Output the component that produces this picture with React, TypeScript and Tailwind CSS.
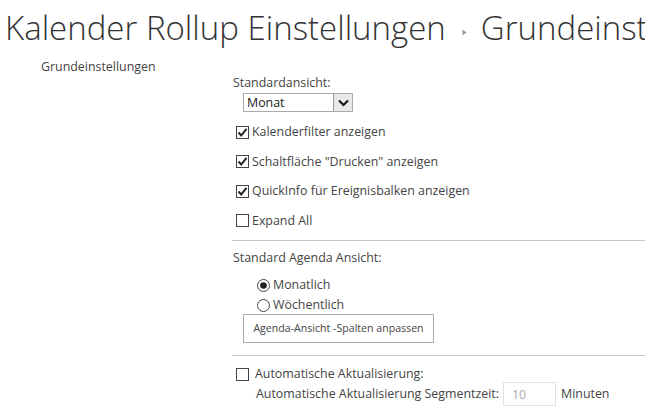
import React from "react";

const font = { fontFamily: '"Open Sans", "Noto Sans", sans-serif' };

function Check({ checked }: { checked: boolean }) {
  return (
    <svg width="13" height="13" viewBox="0 0 13 13" className="shrink-0">
      <rect x="0.5" y="0.5" width="12" height="12" fill="#fff" stroke="#444" />
      {checked && <path d="M2.5 6.5 L5.2 9.5 L10.5 2.8" fill="none" stroke="#222" strokeWidth="2" />}
    </svg>
  );
}

function Radio({ checked }: { checked: boolean }) {
  return (
    <svg width="13" height="13" viewBox="0 0 13 13" className="shrink-0">
      <circle cx="6.5" cy="6.5" r="6" fill="#fff" stroke="#444" />
      {checked && <circle cx="6.5" cy="6.5" r="3.3" fill="#222" />}
    </svg>
  );
}

export default function App() {
  return (
    <div className="w-[645px] h-[412px] overflow-hidden bg-white text-[#444] text-[12.4px]" style={font}>
      <div className="pl-[5px] pt-[1px] h-[55px] whitespace-nowrap text-[33px] font-light text-[#333] leading-[48px] flex items-center">
        <span>Kalender Rollup Einstellungen</span>
        <svg width="5" height="7" viewBox="0 0 5 7" className="ml-[16px] mr-[14px] mt-[8px] shrink-0">
          <path d="M0.5 0.5 L4.5 3.5 L0.5 6.5 Z" fill="#999" />
        </svg>
        <span>Grundeinstellungen</span>
      </div>
      <div className="flex">
        <div className="w-[232px] pl-[41px] pt-[3px] text-[#444]">Grundeinstellungen</div>
        <div className="flex-1 pt-[19px]">
          <div className="pl-[1px] leading-[18px]">Standardansicht:</div>
          <div className="pl-[11px] mt-[1px]">
            <div className="w-[110px] h-[19px] border border-[#aaa] flex items-center justify-between">
              <span className="pl-[3px] text-[#222] leading-[17px]">Monat</span>
              <div className="w-[19px] h-[17px] border-l border-[#999] bg-[#e8e8e8] flex items-center justify-center">
                <svg width="11" height="8" viewBox="0 0 11 8">
                  <path d="M1 1.5 L5.5 6 L10 1.5" fill="none" stroke="#111" strokeWidth="2" />
                </svg>
              </div>
            </div>
          </div>
          <div className="pl-[4px] mt-[11px] flex flex-col gap-[11.5px]">
            {[
              ["Kalenderfilter anzeigen", true],
              ['Schaltfläche "Drucken" anzeigen', true],
              ["QuickInfo für Ereignisbalken anzeigen", true],
              ["Expand All", false],
            ].map(([t, c]) => (
              <div key={t as string} className="flex items-center gap-[3px] h-[18px] leading-[18px]">
                <Check checked={c as boolean} />
                <span>{t as string}</span>
              </div>
            ))}
          </div>
          <div className="h-px bg-[#c6c6c6] mt-[10px]" />
          <div className="pl-[1px] mt-[8px] leading-[18px]">Standard Agenda Ansicht:</div>
          <div className="pl-[25px] mt-[9.5px] flex flex-col gap-[2px]">
            <div className="flex items-center gap-[3px] h-[18px]">
              <Radio checked />
              <span>Monatlich</span>
            </div>
            <div className="flex items-center gap-[3px] h-[18px]">
              <Radio checked={false} />
              <span>Wöchentlich</span>
            </div>
          </div>
          <div className="pl-[11px]">
            <div className="w-[191px] h-[29px] border border-[#ababab] flex items-center justify-center text-[10.6px] text-[#444]">
              Agenda-Ansicht -Spalten anpassen
            </div>
          </div>
          <div className="h-px bg-[#c6c6c6] mt-[12px]" />
          <div className="pl-[4px] mt-[10px] flex items-center gap-[6px] h-[16px]">
            <Check checked={false} />
            <span>Automatische Aktualisierung:</span>
          </div>
          <div className="pl-[24px] flex items-center h-[24px]">
            <span>Automatische Aktualisierung Segmentzeit:</span>
            <div className="ml-[4px] w-[53px] h-[24px] border border-[#e1e1e1] flex items-center pl-[8px] pt-[2px] text-[#aaa]">10</div>
            <span className="ml-[5px]">Minuten</span>
          </div>
        </div>
      </div>
    </div>
  );
}
